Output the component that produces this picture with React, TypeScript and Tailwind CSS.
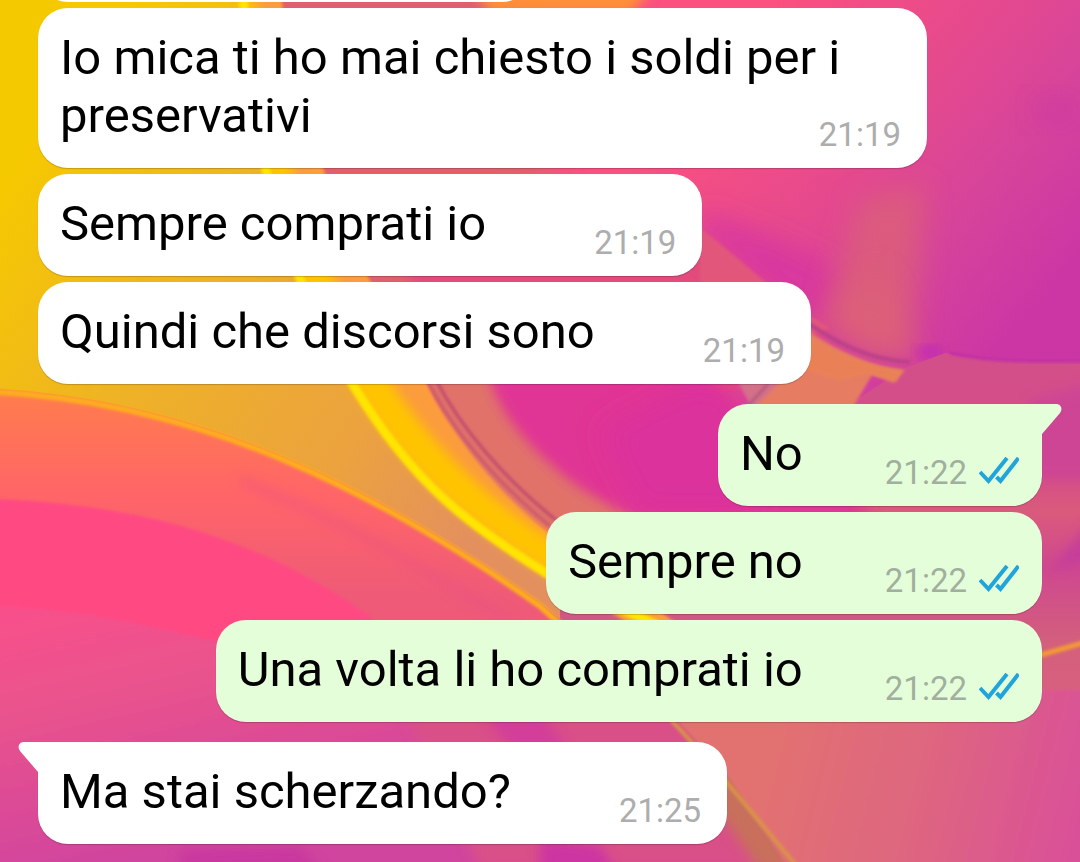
import clsx from "clsx";

interface Message {
  text: string;
  time: string;
  outgoing?: boolean;
  // first message of a group, drawn with a tail
  first?: boolean;
}

const messages: Message[] = [
  { text: "Io mica ti ho mai chiesto i soldi per i preservativi", time: "21:19" },
  { text: "Sempre comprati io", time: "21:19" },
  { text: "Quindi che discorsi sono", time: "21:19" },
  { text: "No", time: "21:22", outgoing: true, first: true },
  { text: "Sempre no", time: "21:22", outgoing: true },
  { text: "Una volta li ho comprati io", time: "21:22", outgoing: true },
  { text: "Ma stai scherzando?", time: "21:25", first: true },
];

function Wallpaper() {
  return (
    <svg
      className="absolute inset-0 -z-10 h-full w-full"
      viewBox="0 0 1080 862"
      preserveAspectRatio="xMidYMid slice"
      aria-hidden="true"
    >
      <defs>
        <linearGradient id="gold" gradientUnits="userSpaceOnUse" x1="0" y1="180" x2="480" y2="520">
          <stop offset="0" stopColor="#f5c900" />
          <stop offset="0.4" stopColor="#eeb128" />
          <stop offset="0.75" stopColor="#eba23f" />
          <stop offset="1" stopColor="#e4905e" />
        </linearGradient>
        <linearGradient id="sky" gradientUnits="userSpaceOnUse" x1="740" y1="40" x2="1040" y2="300">
          <stop offset="0" stopColor="#fb5080" />
          <stop offset="0.4" stopColor="#e64a8c" />
          <stop offset="0.7" stopColor="#d6449a" />
          <stop offset="1" stopColor="#cc36a4" />
        </linearGradient>
        <linearGradient id="ground" gradientUnits="userSpaceOnUse" x1="760" y1="740" x2="1080" y2="820">
          <stop offset="0" stopColor="#e27270" />
          <stop offset="0.5" stopColor="#de667f" />
          <stop offset="1" stopColor="#d95098" />
        </linearGradient>
        <linearGradient id="right" gradientUnits="userSpaceOnUse" x1="0" y1="360" x2="0" y2="740">
          <stop offset="0" stopColor="#d34f8a" />
          <stop offset="0.3" stopColor="#d44f88" />
          <stop offset="0.4" stopColor="#da5a7c" />
          <stop offset="0.55" stopColor="#cf4890" />
          <stop offset="0.75" stopColor="#d3607c" />
          <stop offset="1" stopColor="#dc5f80" />
        </linearGradient>
        <linearGradient id="coral" gradientUnits="userSpaceOnUse" x1="0" y1="390" x2="0" y2="600">
          <stop offset="0" stopColor="#ff7d4c" />
          <stop offset="0.5" stopColor="#ff6568" />
          <stop offset="1" stopColor="#ee5a78" />
        </linearGradient>
        <linearGradient id="rose" gradientUnits="userSpaceOnUse" x1="60" y1="600" x2="120" y2="862">
          <stop offset="0" stopColor="#f8508a" />
          <stop offset="0.4" stopColor="#e8528d" />
          <stop offset="1" stopColor="#d0449e" />
        </linearGradient>
        <filter id="soft" x="-20%" y="-20%" width="140%" height="140%">
          <feGaussianBlur stdDeviation="1.5" />
        </filter>
        <filter id="fade" x="-20%" y="-20%" width="140%" height="140%">
          <feGaussianBlur stdDeviation="6" />
        </filter>
        <filter id="blur" x="-40%" y="-40%" width="180%" height="180%">
          <feGaussianBlur stdDeviation="14" />
        </filter>
      </defs>

      <rect width="1080" height="862" fill="url(#gold)" />
      <path d="M240 0C245 130 275 260 350 385C410 480 460 520 560 582L700 660L860 862H1080V0Z" fill="url(#sky)" />
      <path d="M260 -20H560L560 150L500 240L400 300L330 300L290 240Z" fill="#e0606c" filter="url(#blur)" />
      <path d="M470 -20H660L630 14H490Z" fill="#ff8f38" filter="url(#fade)" />
      <path d="M400 262L690 226L830 330L720 400H490Z" fill="#e24c7c" filter="url(#fade)" />

      {/* upper right folds */}
      <path d="M700 210L780 240L840 270L830 330C790 310 740 270 700 235Z" fill="#d8389f" filter="url(#blur)" />
      <path d="M860 200L925 185L912 360L822 325Z" fill="#db6078" opacity="0.8" filter="url(#blur)" />
      <path d="M836 316L880 270L912 362L860 350Z" fill="#dd6476" opacity="0.7" filter="url(#blur)" />
      <path d="M700 228C745 262 780 300 830 328L800 340L700 290Z" fill="#e2567c" filter="url(#soft)" />
      <ellipse cx="930" cy="352" rx="14" ry="6" fill="#c02bb8" filter="url(#fade)" />
      <ellipse cx="1055" cy="110" rx="22" ry="14" fill="#c836a6" opacity="0.6" filter="url(#blur)" />

      {/* lower right */}
      <path d="M905 368L945 353C990 362 1030 362 1100 360V740H560V500L700 520L850 404Z" fill="url(#right)" />
      <path d="M950 353C990 362 1030 362 1100 361" fill="none" stroke="#c22fa5" strokeWidth="3" filter="url(#soft)" />
      <path d="M1030 400L1100 380V480H1030Z" fill="#c93f9c" opacity="0.6" filter="url(#fade)" />
      <path d="M1050 570L1100 510V560Z" fill="#bf38a0" opacity="0.7" filter="url(#fade)" />

      {/* magenta bowl */}
      <path d="M420 370H560L720 470L680 540H560L480 480Z" fill="#e0726a" />
      <path
        d="M487 370C500 420 535 450 557 470C580 490 600 500 640 520H880L770 440L738 410L700 370Z"
        fill="#e03694"
        filter="url(#fade)"
      />
      <path d="M600 430L700 378L735 395L760 440V512H640Z" fill="#db319c" filter="url(#blur)" />
      <path d="M736 378L752 408H760L790 378Z" fill="#d4708a" filter="url(#soft)" />
      <path d="M746 408L768 384" fill="none" stroke="#b85a7c" strokeWidth="3" filter="url(#soft)" />

      {/* orange shard */}
      <path d="M806 330C840 352 870 366 905 370L894 383L872 375L850 412H750L784 378Z" fill="#e67d62" filter="url(#soft)" />
      <path d="M800 332C840 354 870 368 902 370L896 381L868 374L840 380L800 368Z" fill="#ea8156" filter="url(#soft)" />
      <path d="M806 322C840 345 870 360 910 362" fill="none" stroke="#b93f88" strokeWidth="4" filter="url(#soft)" />

      {/* golden ribbon */}
      <path
        d="M240 -10C245 130 275 260 350 385C410 480 460 520 560 582L640 630L700 640L560 540C500 500 450 430 428 385C350 260 300 130 280 -10Z"
        fill="#fb9c3c"
        filter="url(#soft)"
      />
      <path
        d="M243 -10C248 130 278 260 353 385C413 480 463 520 563 582L650 622L560 545C480 495 430 440 392 385C314 260 270 130 254 -10Z"
        fill="#ffc400"
        filter="url(#fade)"
      />
      <path
        d="M243 -10C248 130 278 262 355 388C413 482 464 524 564 584L660 626"
        fill="none"
        stroke="#ffe500"
        strokeWidth="9"
        filter="url(#soft)"
      />
      <path d="M427 380C455 435 500 485 550 526" fill="none" stroke="#c9586a" strokeWidth="3" filter="url(#soft)" />
      <path d="M436 380C462 430 506 480 556 520" fill="none" stroke="#c04a6c" strokeWidth="3" filter="url(#soft)" />

      {/* left wave */}
      <path d="M-20 388C200 396 380 490 540 603L660 700L790 862H-20Z" fill="url(#coral)" />
      <path d="M240 480C340 520 430 570 510 622" fill="none" stroke="#ea4f84" strokeWidth="8" opacity="0.5" filter="url(#fade)" />
      <path d="M-20 391C200 399 380 493 540 606L670 723" fill="none" stroke="#fdae1e" strokeWidth="6" filter="url(#soft)" />
      <path d="M-40 498C150 500 270 545 370 617L480 742L-40 760Z" fill="#ff4883" filter="url(#soft)" />
      <path d="M-60 604C80 606 150 626 230 645L420 700L640 742L760 880L-60 900Z" fill="url(#rose)" filter="url(#soft)" />
      <path d="M400 700H680L790 870H480Z" fill="#d94f88" filter="url(#fade)" />
      <path d="M480 710H540L575 760H520Z" fill="#d0399f" opacity="0.7" filter="url(#fade)" />
      <path d="M180 850L300 846L330 880H180Z" fill="#c9399f" filter="url(#fade)" />
      <path d="M540 838L600 846L620 880H540Z" fill="#cc36a2" filter="url(#fade)" />
      <path d="M720 760L800 870H760L710 800Z" fill="#c8705c" filter="url(#fade)" />

      <path d="M671 714L726 773L797 880H1100V690H671Z" fill="url(#ground)" filter="url(#soft)" />
      <path d="M671 720C710 760 745 805 795 864" fill="none" stroke="#d99446" strokeWidth="4" filter="url(#soft)" />
      <path d="M1030 658L1090 641" fill="none" stroke="#f39a34" strokeWidth="5" filter="url(#soft)" />
    </svg>
  );
}

function Tail({ outgoing }: { outgoing?: boolean }) {
  return (
    <svg
      className={clsx(
        "absolute top-0 h-[30px] w-5",
        outgoing ? "left-full fill-[#e5feda]" : "right-full -scale-x-100 fill-white"
      )}
      viewBox="0 0 20 30"
      aria-hidden="true"
    >
      <path d="M-1 0H14C19 0 21 5 18 9L0 30H-1Z" />
    </svg>
  );
}

function ReadTicks() {
  return (
    <svg
      className="mt-1 h-7 w-10"
      viewBox="0 0 40 28"
      fill="none"
      stroke="#1fa4dc"
      strokeWidth="4"
      role="img"
      aria-label="Letto"
    >
      <path d="M1 15L9.5 24L28 1" />
      <path d="M17.5 20L21.5 24L39.5 1" />
    </svg>
  );
}

function Bubble({ message }: { message: Message }) {
  const { text, time, outgoing, first } = message;

  return (
    <li
      className={clsx(
        "relative max-w-[889px] rounded-[30px] pt-[21px] pb-[13px] pl-[22px] text-[49px] leading-[58px] text-black shadow-[0_1px_1px_rgba(0,0,0,0.2)]",
        outgoing ? "self-end bg-[#e5feda] pr-[23px]" : "self-start bg-white pr-[26px]",
        first && "mt-[14px]",
        first && (outgoing ? "rounded-tr-none" : "rounded-tl-none")
      )}
    >
      {first && <Tail outgoing={outgoing} />}
      {text}
      <span
        className={clsx(
          "float-right mt-7 flex items-start gap-3 text-[33px] leading-10",
          outgoing ? "ml-[82px] text-[#a1b09e]" : "ml-[108px] text-[#adadad]"
        )}
      >
        <time>{time}</time>
        {outgoing && <ReadTicks />}
      </span>
    </li>
  );
}

export default function App() {
  return (
    <main className="relative isolate min-h-screen overflow-hidden px-[38px] pb-[18px] font-[Roboto,sans-serif]">
      <Wallpaper />
      <ul className="flex flex-col gap-[6px]">
        {/* message scrolled out at the top */}
        <li className="-mt-7 h-[30px] w-[494px] rounded-b-[30px] bg-white" />
        {messages.map((message) => (
          <Bubble key={message.text} message={message} />
        ))}
      </ul>
    </main>
  );
}
